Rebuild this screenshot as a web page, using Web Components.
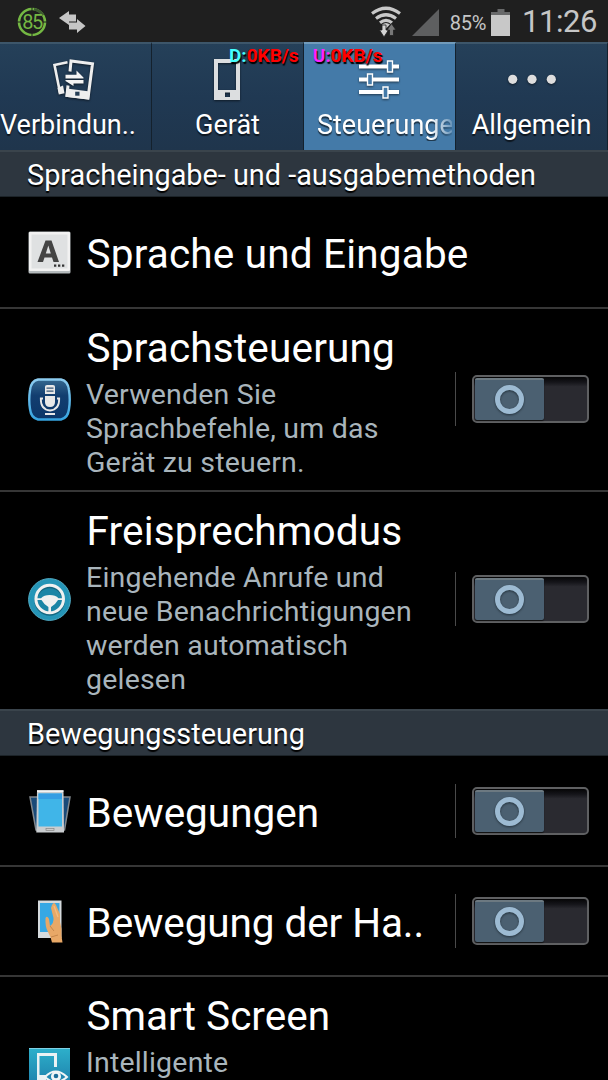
<!DOCTYPE html>
<html lang="de">
<head>
<meta charset="utf-8">
<title>Einstellungen</title>
<style>
    body {
        margin: 0;
        background: #000;
        color: #fff;
        font-family: Roboto, "Liberation Sans", sans-serif;
        width: 608px;
        height: 1080px;
        overflow: hidden;
    }
</style>
</head>
<body>
<settings-screen></settings-screen>

<script>
// ═══════════════════════════════════════
// ICONS
// ═══════════════════════════════════════

const ICONS = {
    connections: `<svg width="46" height="46" viewBox="1 0 46 46">
        <path d="M15.500 6.300 2.500 9 8 36.500" fill="none" stroke="#eee" stroke-width="2.600"/>
        <path d="M5.500 32 11 29.500 12.500 37.300 6.800 38.500Z" fill="#eee"/>
        <path d="M18 15.500 19 5 40.500 7.700 36 42 15 39.500 16 29.500" fill="none" stroke="#eee" stroke-width="3"/>
        <path d="M14.500 32.500 38 35.500 37 43.500 13.500 40.700Z" fill="#eee"/>
        <rect x="23.200" y="35.700" width="4.300" height="4" fill="#263e55"/>
        <path d="M13.500 18.700H24.500V14.500L31.500 21.500V22.600H13.500ZM31.500 24H13.500V25L21.500 30V27.500H31.500Z" fill="#f4f4f4"/></svg>`,
    device: `<svg width="46" height="46" viewBox="1 0 46 46">
        <path fill-rule="evenodd" fill="#dcdee0" d="M10 3H36V44H10ZM14 7V34H32V7ZM21 36.500V41H26V36.500Z"/></svg>`,
    controls: `<svg width="46" height="46" viewBox="1 0 46 46">
        <path d="M3 10.500H43M3 23.500H43M3 36H43" stroke="#fff" stroke-width="4"/>
        <path d="M31.500 5H36.500V16H31.500ZM11.500 18H16.500V29H11.500ZM27 31H32V42H27Z" fill="#447aa8" stroke="#fff" stroke-width="1.400"/></svg>`,
    general: `<svg width="50" height="46" viewBox="0 0 50 46">
        <g fill="#dedede"><circle cx="5.700" cy="23.300" r="4.600"/><circle cx="25" cy="23.300" r="4.600"/><circle cx="44.300" cy="23.300" r="4.600"/></g></svg>`,
    language: `<svg width="43" height="43" viewBox="0 0 43 43">
        <rect x=".500" y=".500" width="42" height="42" rx="1.500" fill="#b4babc"/>
        <rect x="1" y="1" width="41" height="39" rx="1" fill="#f2f2f2"/>
        <rect x="3.500" y="3.500" width="36" height="34" fill="#dfe1e2"/>
        <path fill-rule="evenodd" fill="#444" d="M9.500 31 17.500 9.500H23.500L31 31H25.500L24 26.500H16.500L15 31ZM17.800 22.500H22.800L20.300 14.500Z"/>
        <path d="M26 33.500h2.300v2.300h-2.300zM30 33.500h2.300v2.300h-2.300zM34 33.500h2.300v2.300h-2.300z" fill="#333"/></svg>`,
    voice: `<svg width="43" height="43" viewBox="0 0 43 43">
        <defs>
            <linearGradient id="rim" x2="0" y2="1"><stop stop-color="#8cccf0"/><stop offset="1" stop-color="#36a4e0"/></linearGradient>
            <linearGradient id="face" x2="0" y2="1"><stop stop-color="#35688f"/><stop offset=".400" stop-color="#123e70"/><stop offset="1" stop-color="#0c3668"/></linearGradient>
        </defs>
        <path d="M10 1.500H33Q40 3 41 12Q42.500 22 41 31Q40 40 33 41.500H10Q3 40 2 31Q.500 22 2 12Q3 3 10 1.500Z" fill="url(#face)" stroke="url(#rim)" stroke-width="2.400"/>
        <path d="M17 16V8.500Q17 7 19 7H25Q27 7 27 8.500V16Z" fill="#e8e8e8"/>
        <path d="M18.500 10.200H25.500M18.500 13.200H25.500" stroke="#375777" stroke-width="1.200"/>
        <path d="M17 18H27V24Q27 29 22 29Q17 29 17 24Z" fill="#e8e8e8"/>
        <path d="M15 20.500H12.800Q12.500 31.500 22 32.500Q31.500 31.500 31.200 20.500H29" fill="none" stroke="#e8e8e8" stroke-width="1.800"/>
        <path d="M17 36H27" stroke="#e8e8e8" stroke-width="2"/></svg>`,
    wheel: `<svg width="43" height="43" viewBox="0 0 43 43">
        <circle cx="21.500" cy="21.500" r="20.900" fill="#2595b7" stroke="#52abc4"/>
        <circle cx="21.700" cy="22.500" r="13.800" fill="#1b85a6" stroke="#146781" stroke-width="3"/>
        <circle cx="21.700" cy="21" r="13.800" fill="none" stroke="#f1f1f1" stroke-width="3"/>
        <path d="M8 20.200H13Q16 17 21.700 17Q27.500 17 30.500 20.200H35.500V22H30Q27.500 26.500 23 29V34H20.400V29Q16 26.500 13.500 22H8Z" fill="#f1f1f1"/></svg>`,
    motion: `<svg width="43" height="43" viewBox="0 0 43 43">
        <path d="M2 7H10V40H8Z" fill="#194a78" stroke="#81878c" stroke-width="1.500"/>
        <path d="M42 7H34V40H36.500Z" fill="#194a78" stroke="#81878c" stroke-width="1.500"/>
        <path d="M9 .500H35.500L36 42.500H8.300Z" fill="#c9cdd0"/>
        <path d="M9 1H35.500" stroke="#fff" stroke-width="1.500"/>
        <path d="M10.500 3.500H34V36.500H10.500Z" fill="#40b5e8"/>
        <path d="M10.500 3.500H34V9H10.500Z" fill="#359ee3"/>
        <rect x="18" y="38.500" width="8" height="2" fill="#ccc" stroke="#888" stroke-width=".700"/></svg>`,
    hand: `<svg width="43" height="43" viewBox="0 0 43 43">
        <path d="M10 .500H33.500V38H10Z" fill="#d5dadd"/>
        <path d="M12 3H31.500V32H12Z" fill="#37a8e4"/>
        <path d="M24 5Q26 1 28 5L32 14V22Q34 28 33.500 36L34.500 42.500H24Q23 37 20 32Q17 27 17.500 18Q19 15 21 19L22 26Q26 23 25.500 18L23 8Z" fill="#e8a867"/>
        <path d="M26 6 30 17" stroke="#f2bd81" stroke-width="1.300"/>
        <path d="M22 26 26 31M23 37 30 35" stroke="#bd7d43" fill="none" stroke-width=".800"/></svg>`,
    smart: `<svg width="43" height="43" viewBox="0 0 43 43">
        <defs><linearGradient id="sm" x2="0" y2="1"><stop stop-color="#2db0cb"/><stop offset="1" stop-color="#1d7ba8"/></linearGradient></defs>
        <rect x="1" y="1" width="41" height="41" rx="1" fill="url(#sm)"/>
        <path d="M1 1.500H42" stroke="#7ed1e5"/>
        <path fill-rule="evenodd" fill="#eaf2f4" d="M9 6H29V20H26V9H11.500V28H18V38H9Z"/>
        <path d="M17 30Q27.500 19 39 30Q27.500 40 17 30Z" fill="#2387b0" stroke="#f1f5f6" stroke-width="2"/>
        <circle cx="28" cy="29.500" r="5" fill="#f1f5f6"/><circle cx="28" cy="29" r="2.300" fill="#1c6d99"/></svg>`
};

function attach(el, html) {
    el.attachShadow({ mode: 'open' }).innerHTML = html;
}

// ═══════════════════════════════════════
// STATUS BAR
// ═══════════════════════════════════════

class StatusBar extends HTMLElement {
    connectedCallback() {
        attach(this, `
            <style>
                :host {
                    display: flex;
                    align-items: center;
                    height: 42px;
                    box-sizing: border-box;
                    padding: 2px 11px 0 16px;
                    background: #1f1f1f;
                    color: #c6c6c6;
                }
                svg { display: block; flex: none; }
                .level {
                    display: grid;
                    place-items: center;
                    width: 32px;
                    height: 32px;
                    color: #74b843;
                    font-size: 20px;
                    letter-spacing: -1.500px;
                }
                .level > * { grid-area: 1 / 1; }
                .sync { margin: -1px auto 0 10px; }
                .wifi { margin-right: 10px; }
                .percent { font-size: 20px; margin: 2px 5px 0 11px; letter-spacing: -0.300px; }
                .time { font-size: 31px; margin-left: 11px; line-height: 40px; letter-spacing: -0.450px; }
            </style>
            <div class="level">
                <svg width="32" height="32" viewBox="0 0 32 32" fill="none" stroke-width="2.600">
                    <circle cx="16" cy="16" r="13" stroke="#74b843" pathLength="80" stroke-dasharray="19 1" stroke-dashoffset="-.500"/>
                    <path d="M18 3.200A13 13 0 0 1 27 9.200" stroke="#3c5930"/>
                </svg>
                <span>85</span>
            </div>
            <svg class="sync" width="28" height="24" viewBox="0 0 28 24" fill="#c6c6c6">
                <path d="M1 8 11 1V4.500H18V11.500H11V15Z"/><path d="M27.500 16 19 9V12.500H11V19.500H19V23Z"/>
            </svg>
            <svg class="wifi" width="32" height="32" viewBox="0 0 32 32">
                <g fill="none" stroke="#c8c8c8" stroke-width="3.200">
                    <path d="M2 7.500Q16 -3 30 7.500"/><path d="M6 12.500Q16 5 26 12.500"/><path d="M10 16.800Q16 12 22 16.800"/>
                </g>
                <path d="M12 18.500Q16 15.500 20 18.500L16 22.500Z" fill="#c8c8c8"/>
                <path d="M12 19H16V24H18.500L14 31 9.500 24H12Z" fill="#d4d4d4" stroke="#1f1f1f" stroke-width=".800"/>
                <path d="M19.500 29.500V24H17L21.500 17.500 26 24H23.500V29.500Z" fill="#777" stroke="#1f1f1f" stroke-width=".800"/>
            </svg>
            <svg width="27" height="27" viewBox="0 0 27 27"><path d="M27 0V27H0Z" fill="#5e5f60"/></svg>
            <span class="percent">85%</span>
            <svg width="20" height="27" viewBox="0 0 20 27">
                <path d="M6.500 0H13.500V3H19V6H0V3H6.500Z" fill="#68696a"/><path d="M0 6H19V27H0Z" fill="#c8c8c8"/>
            </svg>
            <span class="time">11:26</span>
        `);
    }
}

// ═══════════════════════════════════════
// TABS
// ═══════════════════════════════════════

class SettingsTab extends HTMLElement {
    connectedCallback() {
        attach(this, `
            <style>
                :host {
                    display: flex;
                    flex-direction: column;
                    align-items: center;
                    box-sizing: border-box;
                    height: 108px;
                    padding-top: 12px;
                    border-top: 2px solid #3d566a;
                    border-right: 1px solid #14212d;
                    background: linear-gradient(#254059, #203953 50%, #1f354c);
                    overflow: hidden;
                }
                :host([selected]) {
                    background: #447aa8;
                    border-top-color: #719bbb;
                }
                svg { display: block; filter: drop-shadow(0 1px 1px #0008); }
                .label {
                    margin-top: 7px;
                    font-size: 27px;
                    line-height: 32px;
                    white-space: nowrap;
                    text-shadow: 0 2px 1px rgba(0, 0, 0, 0.600);
                }
                :host([align="start"]) .label { align-self: flex-start; }
                :host([selected]) .label {
                    align-self: stretch;
                    padding-left: 13px;
                    margin-right: 3px;
                    overflow: hidden;
                    -webkit-mask-image: linear-gradient(90deg, #000 86%, #0003);
                    mask-image: linear-gradient(90deg, #000 86%, #0003);
                }
            </style>
            ${ICONS[this.getAttribute('icon')]}
            <div class="label"><slot></slot></div>
        `);
    }
}

class SettingsTabs extends HTMLElement {
    connectedCallback() {
        attach(this, `
            <style>
                :host { display: grid; grid-template-columns: 152px 152px 152px 152px; }
            </style>
            <slot></slot>
        `);
    }
}

// ═══════════════════════════════════════
// TRAFFIC OVERLAY - floats above the tabs
// ═══════════════════════════════════════

class TrafficMeter extends HTMLElement {
    connectedCallback() {
        attach(this, `
            <style>
                :host {
                    position: absolute;
                    left: 229px;
                    top: 45px;
                    display: flex;
                    gap: 14px;
                    font-size: 19px;
                    line-height: 22px;
                    font-weight: 700;
                    color: #f00;
                    text-shadow: 1px 2px 1px #000;
                    white-space: nowrap;
                }
                .down { color: #4ff; }
                .up { color: #f2f; }
            </style>
            <div><span class="down">D:</span>0KB/s</div>
            <div><span class="up">U:</span>0KB/s</div>
        `);
    }
}

// ═══════════════════════════════════════
// LIST
// ═══════════════════════════════════════

class SectionHeader extends HTMLElement {
    connectedCallback() {
        attach(this, `
            <style>
                :host {
                    display: block;
                    box-sizing: border-box;
                    height: 47px;
                    padding-left: 27px;
                    border-top: 2px solid #3a444c;
                    border-bottom: 1px solid #1c2328;
                    background: #2d363f;
                    font-size: 28.850px;
                    line-height: 46px;
                    text-shadow: 0 2px 1px #000;
                }
            </style>
            <slot></slot>
        `);
    }
}

class ToggleSwitch extends HTMLElement {
    connectedCallback() {
        attach(this, `
            <style>
                :host {
                    display: flex;
                    box-sizing: border-box;
                    width: 117px;
                    height: 48px;
                    padding: 1px;
                    border: 2px solid #5f6062;
                    border-radius: 5px;
                    background: linear-gradient(#050506, #15151a 12%, #2a2a30 22%);
                }
                .knob {
                    display: grid;
                    place-items: center;
                    width: 69px;
                    box-sizing: border-box;
                    border-top: 2px solid #6c7981;
                    border-radius: 2px;
                    background: #4b6071;
                    box-shadow: 0 1px 1px #111;
                }
                .ring {
                    box-sizing: border-box;
                    width: 29px;
                    height: 29px;
                    margin-top: -1px;
                    border: 5px solid #9dbbd3;
                    border-radius: 50%;
                    filter: drop-shadow(0 1px 1px #24323d);
                }
            </style>
            <div class="knob"><div class="ring"></div></div>
        `);
    }
}

class SettingsRow extends HTMLElement {
    connectedCallback() {
        const toggle = this.hasAttribute('toggle')
            ? '<div class="divider"></div><toggle-switch></toggle-switch>' : '';
        attach(this, `
            <style>
                :host {
                    display: flex;
                    align-items: center;
                    box-sizing: border-box;
                    height: var(--row-height, 111px);
                    padding: 0 19px var(--lift, 0) 28px;
                    border-bottom: 2px solid #363636;
                }
                svg { display: block; flex: none; margin: 1px 15px 0 0; }
                .text {
                    flex: 1;
                    min-width: 0;
                    padding-top: var(--drop, 5px);
                    white-space: nowrap;
                }
                :host([top]) .text { align-self: flex-start; padding-top: 16px; }
                .title {
                    padding-left: 0.500px;
                    font-size: 40.500px;
                    line-height: 47px;
                    letter-spacing: var(--tracking, 0);
                }
                ::slotted(*) {
                    display: block;
                    margin-top: 6px;
                    color: #a9b5bc;
                    font-size: 28.500px;
                    line-height: 33.800px;
                    letter-spacing: 0.200px;
                }
                .divider { width: 1px; height: 54px; background: #4a4a4a; margin-right: 16px; }
            </style>
            ${ICONS[this.getAttribute('icon')]}
            <div class="text">
                <div class="title">${this.getAttribute('label')}</div>
                <slot></slot>
            </div>
            ${toggle}
        `);
    }
}

// ═══════════════════════════════════════
// SCREEN
// ═══════════════════════════════════════

class SettingsScreen extends HTMLElement {
    connectedCallback() {
        attach(this, `
            <style>
                :host { display: block; width: 608px; height: 1080px; overflow: hidden; background: #000; }
            </style>
            <status-bar></status-bar>
            <settings-tabs>
                <settings-tab icon="connections" align="start">Verbindun..</settings-tab>
                <settings-tab icon="device">Gerät</settings-tab>
                <settings-tab icon="controls" selected>Steuerunge</settings-tab>
                <settings-tab icon="general">Allgemein</settings-tab>
            </settings-tabs>
            <traffic-meter></traffic-meter>
            <section-header>Spracheingabe- und -ausgabemethoden</section-header>
            <settings-row icon="language" label="Sprache und Eingabe" style="--row-height: 112px; --tracking: 0.180px"></settings-row>
            <settings-row icon="voice" label="Sprachsteuerung" toggle style="--row-height: 183px; --lift: 2px; --drop: 8px; --tracking: 0.180px">
                <span>Verwenden Sie<br>Sprachbefehle, um das<br>Gerät zu steuern.</span>
            </settings-row>
            <settings-row icon="wheel" label="Freisprechmodus" toggle style="--row-height: 217px; --lift: 4px; --drop: 8px; --tracking: 0.180px; border-bottom: 0">
                <span>Eingehende Anrufe und<br>neue Benachrichtigungen<br>werden automatisch<br>gelesen</span>
            </settings-row>
            <section-header>Bewegungssteuerung</section-header>
            <settings-row icon="motion" label="Bewegungen" toggle></settings-row>
            <settings-row icon="hand" label="Bewegung der Ha.." toggle style="--row-height: 110px; --tracking: -0.100px"></settings-row>
            <settings-row icon="smart" label="Smart Screen" top style="--row-height: 183px">
                <span>Intelligente</span>
            </settings-row>
        `);
    }
}

customElements.define('status-bar', StatusBar);
customElements.define('settings-tab', SettingsTab);
customElements.define('settings-tabs', SettingsTabs);
customElements.define('traffic-meter', TrafficMeter);
customElements.define('section-header', SectionHeader);
customElements.define('toggle-switch', ToggleSwitch);
customElements.define('settings-row', SettingsRow);
customElements.define('settings-screen', SettingsScreen);
</script>
</body>
</html>
